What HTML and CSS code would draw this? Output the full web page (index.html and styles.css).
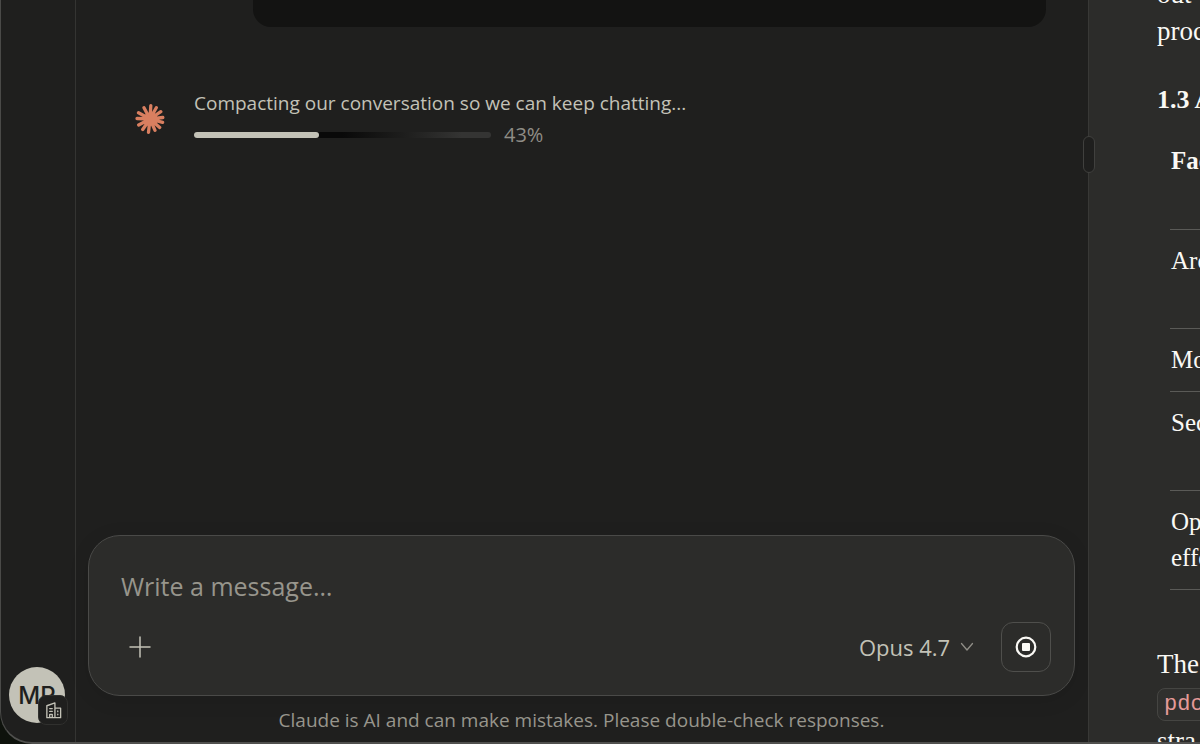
FILE: index.html
```
<!DOCTYPE html>
<html lang="en">
<head>
    <meta charset="UTF-8">
    <meta name="viewport" content="width=device-width, initial-scale=1.0">
    <title>Claude</title>
    <link rel="stylesheet" href="styles.css">
</head>
<body>

    <div class="app">
        <aside class="sidebar">
            <button class="avatar" type="button" aria-label="Account">
                <span class="initials">MP</span>
                <span class="org-badge">
                    <svg viewBox="0 0 20 20" width="19" height="19" fill="none" stroke="currentColor" stroke-width="1.4" stroke-linejoin="round" stroke-linecap="round">
                        <path d="M3 17.500V5L11.500 2V17.500M11.500 7.500H17.500V17.500H3M6 8H8.700M6 11H8.700M6 17.500V14H8.700V17.500M14.500 10.500V11.200M14.500 13.800V14.500"/>
                    </svg>
                </span>
            </button>
        </aside>

        <main class="chat">
            <div class="messages">
                <div class="user-message"></div>
                <div class="status">
                    <svg class="spark" viewBox="-15 -15 30 30" width="30" height="30" stroke="currentColor" stroke-width="3.300" stroke-linecap="round">
                        <path d="M0 0L.8-13.300M0 0L6.300-11.300M0 0L10.800-7.300M0 0L12.800-1.500M0 0L12.600 3.300M0 0L9.700 8.500M0 0L5 11.300M0 0L-1.500 13.300M0 0L-7.300 10.500M0 0L-11.300 6M0 0L-13-.5M0 0L-11.500-6.200M0 0L-6-11.300"/>
                        <circle r="6.500" fill="currentColor" stroke="none"/>
                    </svg>
                    <div class="status-body">
                        <div class="status-text" id="statusText">Compacting our conversation so we can keep chatting...</div>
                        <div class="progress-row">
                            <div class="progress" role="progressbar" aria-labelledby="statusText" aria-valuenow="43" aria-valuemin="0" aria-valuemax="100">
                                <div class="progress-fill" style="width: 42%"></div>
                            </div>
                            <span class="percent">43%</span>
                        </div>
                    </div>
                </div>
            </div>

            <form class="composer">
                <input class="message-input" type="text" aria-label="Message" placeholder="Write a message…">
                <div class="actions">
                    <button class="add-button" type="button" aria-label="Add">
                        <svg viewBox="0 0 22 22" width="22" height="22" stroke="currentColor" stroke-width="1.500" stroke-linecap="round">
                            <path d="M11 1V21M1 11H21"/>
                        </svg>
                    </button>
                    <div class="model-picker">
                        <select class="model-select" aria-label="Model">
                            <option>Opus 4.7</option>
                        </select>
                        <svg viewBox="0 0 14 10" width="14" height="10" fill="none" stroke="currentColor" stroke-width="1.300" stroke-linecap="round" stroke-linejoin="round">
                            <path d="M1.500 1.500L7 8L12.500 1.500"/>
                        </svg>
                    </div>
                    <button class="stop-button" type="button" aria-label="Stop">
                        <svg viewBox="0 0 22 22" width="22" height="22">
                            <circle cx="11" cy="11" r="9.300" fill="none" stroke="currentColor" stroke-width="2.200"/>
                            <rect x="7" y="7" width="8" height="8" rx="1" fill="currentColor"/>
                        </svg>
                    </button>
                </div>
            </form>
            <p class="disclaimer">Claude is AI and can make mistakes. Please double-check responses.</p>
        </main>

        <section class="document">
            <div class="resize-handle"></div>
            <p>out<br>proc</p>
            <h3>1.3 A</h3>
            <table>
                <thead>
                    <tr class="tall"><th>Fac</th></tr>
                </thead>
                <tbody>
                    <tr class="tall"><td>Arc</td></tr>
                    <tr><td>Mo</td></tr>
                    <tr class="tall"><td>Sec</td></tr>
                    <tr><td>Op<br>effo</td></tr>
                </tbody>
            </table>
            <p>The<br><code>pdc</code><br>stra</p>
        </section>
    </div>

</body>
</html>
```
FILE: styles.css
```
* {
    box-sizing: border-box;
}
body {
    margin: 0;
    background-color: #0e120c;
    font-family: "Open Sans", "Noto Sans", sans-serif;
    color: #c3c2b7;
}
button, input, select {
    font-family: inherit;
    color: inherit;
    background: none;
    border: none;
    padding: 0;
}
svg {
    display: block;
}
.app {
    display: flex;
    height: 100vh;
    overflow: hidden;
    background-color: #1f1f1e;
    border-left: 1px solid #4a4a48;
    border-bottom: 2px solid #50504e;
    border-bottom-left-radius: 32px;
}

/* Sidebar */
.sidebar {
    flex: 0 0 75px;
    display: flex;
    flex-direction: column;
    justify-content: flex-end;
    padding: 0 8px 19px;
    border-right: 1px solid #343432;
}
.avatar {
    position: relative;
    width: 56px;
    height: 56px;
    border-radius: 50%;
    background-color: #c3c2b7;
    color: #1f1f1e;
    cursor: pointer;
}
.initials {
    font-family: Inter, sans-serif;
    font-size: 24px;
    font-weight: 500;
}
.org-badge {
    position: absolute;
    right: -3px;
    bottom: -2px;
    display: flex;
    align-items: center;
    justify-content: center;
    width: 30px;
    height: 30px;
    border: 1px solid #30302e;
    border-radius: 8px;
    background-color: #1f1f1e;
    color: #c3c2b7;
}

/* Conversation */
.chat {
    flex: 1;
    min-width: 0;
    display: flex;
    flex-direction: column;
    padding: 0 13px 0 12px;
}
.messages {
    flex: 1;
    display: flex;
    flex-direction: column;
    padding: 0 29px 0 47px;
}
.user-message {
    align-self: flex-end;
    width: 87%;
    height: 27px;
    border-radius: 0 0 18px 18px;
    background-color: #131312;
}
.status {
    display: flex;
    align-items: center;
    gap: 29px;
    margin-top: 61px;
}
.spark {
    color: #d97f60;
}
.status-text {
    font-size: 19px;
    line-height: 31px;
}
.progress-row {
    display: flex;
    align-items: center;
    gap: 13px;
}
.progress {
    width: 297px;
    height: 6px;
    border-radius: 3px;
    background: linear-gradient(to right, #090909 50%, #1f1f1e 72%, #343433 90%);
}
.progress-fill {
    height: 100%;
    border-radius: 3px;
    background-color: #c3c2b7;
}
.percent {
    font-size: 20px;
    line-height: 31px;
    color: #8f8d86;
}

/* Composer */
.composer {
    display: flex;
    flex-direction: column;
    gap: 18px;
    padding: 32px 23px 23px 32px;
    border: 1px solid #4a4a48;
    border-radius: 32px;
    background-color: #2c2c2a;
    box-shadow: 0 4px 20px rgba(0, 0, 0, 0.1);
}
.message-input {
    height: 36px;
    font-size: 25px;
    outline: none;
}
.message-input::placeholder {
    color: #97958c;
    opacity: 1;
}
.actions {
    display: flex;
    align-items: center;
}
.add-button {
    display: flex;
    justify-content: center;
    width: 38px;
    cursor: pointer;
}
.model-picker {
    display: flex;
    align-items: center;
    gap: 9px;
    margin-left: auto;
    margin-right: 27px;
    color: #8f8d86;
}
.model-select {
    appearance: none;
    font-size: 22px;
    color: #c3c2b7;
    cursor: pointer;
}
.stop-button {
    display: flex;
    align-items: center;
    justify-content: center;
    width: 50px;
    height: 50px;
    border: 1px solid #4f4f4c;
    border-radius: 12px;
    color: #faf9f5;
    cursor: pointer;
}
.disclaimer {
    margin: 0;
    padding: 11px 0 8px;
    text-align: center;
    font-size: 19px;
    line-height: 27px;
    color: #97958c;
}

/* Document panel */
.document {
    position: relative;
    flex: 0 0 112px;
    min-width: 0;
    padding-left: 68px;
    border-left: 1px solid #383836;
    background-color: #2c2c2a;
    color: #faf9f5;
    font-family: "Liberation Serif", serif;
    font-size: 27px;
    line-height: 37px;
    white-space: nowrap;
}
.document p {
    margin: 0;
}
.document p:first-of-type {
    margin-top: -24px;
}
.document h3 {
    margin: 31px 0 12px;
    font-size: 26px;
    line-height: 37px;
}
.document table {
    width: 100%;
    margin: 0 0 56px 13px;
    border-collapse: collapse;
    font-size: 25px;
    line-height: 36px;
}
.document th,
.document td {
    padding: 13px 1px;
    border-bottom: 1px solid #5a5a57;
    text-align: left;
    vertical-align: top;
}
.document .tall {
    height: 99px;
}
.document code {
    padding: 3px 6px;
    border: 1px solid #454542;
    border-radius: 8px;
    background-color: #30302e;
    color: #e59a98;
    font-family: "Liberation Mono", monospace;
    font-size: 22px;
}
.resize-handle {
    position: absolute;
    top: 136px;
    left: -6px;
    width: 12px;
    height: 37px;
    border: 1px solid #40403e;
    border-radius: 6px;
    background-color: #1f1f1e;
    cursor: col-resize;
}
```
